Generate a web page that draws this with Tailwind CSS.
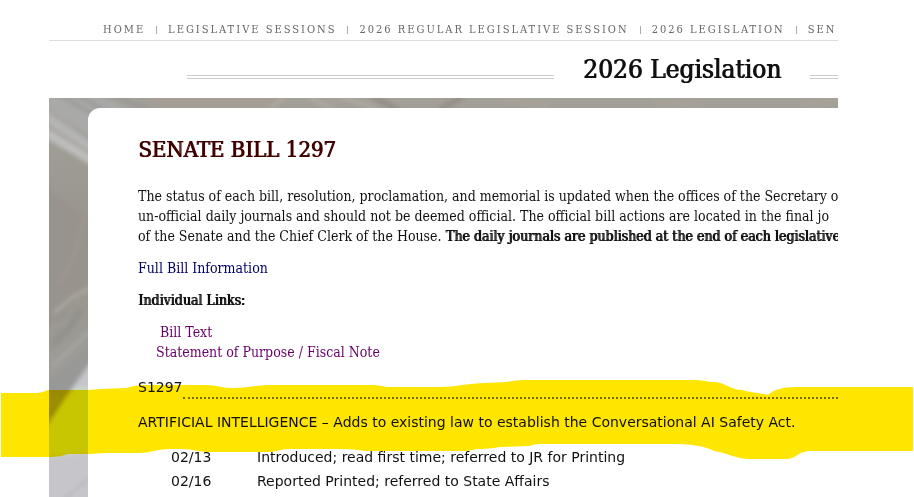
<!DOCTYPE html>
<html lang="en">
<head>
  <meta charset="UTF-8" />
  <meta name="viewport" content="width=device-width, initial-scale=1.0" />
  <title>Senate Bill 1297</title>
  <script src="https://cdn.jsdelivr.net/npm/@tailwindcss/browser@4"></script>
</head>
<body class="bg-white text-[#111] overflow-hidden">
  <div class="relative flex flex-col min-h-screen pl-[49px] pr-[76px] font-['DejaVu_Serif_Condensed','DejaVu_Serif',serif]">

    <!-- BREADCRUMBS -->
    <nav class="flex items-center gap-[11px] overflow-hidden whitespace-nowrap border-b border-[#ddd] pt-5 pl-[54px] text-[11px] leading-5 tracking-[2px] text-[#666]">
      <a href="#">HOME</a>
      <span class="h-2 w-px shrink-0 bg-[#aaa]"></span>
      <a href="#">LEGISLATIVE SESSIONS</a>
      <span class="h-2 w-px shrink-0 bg-[#aaa]"></span>
      <a href="#">2026 REGULAR LEGISLATIVE SESSION</a>
      <span class="h-2 w-px shrink-0 bg-[#aaa]"></span>
      <a href="#">2026 LEGISLATION</a>
      <span class="h-2 w-px shrink-0 bg-[#aaa]"></span>
      <a href="#">SEN</a>
    </nav>

    <!-- PAGE TITLE -->
    <div class="flex items-center gap-[29px] pl-[138px] pt-3 pb-[13px]">
      <div class="mt-4 h-1 flex-1 border-y border-[#ccc]"></div>
      <h1 class="text-[26px] leading-8 whitespace-nowrap [text-shadow:1px_0_currentColor]">2026 Legislation</h1>
      <div class="mt-4 h-1 w-7 border-y border-[#ccc]"></div>
    </div>

    <!-- BILL -->
    <main class="relative flex-1 overflow-hidden bg-[#9c978f] pl-[39px] pt-[10px]">
      <svg class="absolute inset-0 h-full w-full" aria-hidden="true">
        <defs>
          <linearGradient id="wall" x1="0" y1="0" x2="0" y2="1">
            <stop offset="0" stop-color="#a3a099" />
            <stop offset=".35" stop-color="#99958d" />
            <stop offset=".6" stop-color="#9c9a94" />
            <stop offset="1" stop-color="#a3a3a1" />
          </linearGradient>
          <filter id="soft"><feGaussianBlur stdDeviation="2" /></filter>
        </defs>
        <rect width="100%" height="100%" fill="url(#wall)" />
        <g filter="url(#soft)">
          <path d="M-5-5H45L110 25V80L-5 10Z" fill="#a9a9a8" />
          <path d="M-5 12L50 49V60L-5 24Z" fill="#b5b5b5" />
          <path d="M-5 28L50 62V72L-5 39Z" fill="#bdbdbc" />
          <path d="M8-5L60 26M24-5L70 20M60-5L100 12" stroke="#989795" stroke-width="3" />
          <path d="M95-5H240L225 12H110Z" fill="#a49e94" />
          <path d="M220 12L236-2M258-2L285 12M290-2L330 12" stroke="#b0aa9f" stroke-width="4" />
          <path d="M322-2L350 12M390 12L415-2" stroke="#938d83" stroke-width="5" />
          <path d="M455 2L490 4L500 12M605 3L638 7L650 12M750 8L789 1" fill="none" stroke="#a7a298" stroke-width="7" />
          <path d="M-5 90L45 125V170L15 220L-5 230Z" fill="#98938b" />
          <path d="M38 100Q34 145 12 185" fill="none" stroke="#9d9890" stroke-width="4" />
          <path d="M5 215L25 198L42 190" fill="none" stroke="#adaba6" stroke-width="3" />
          <path d="M3 247L20 230L32 211" fill="none" stroke="#93918b" stroke-width="7" />
          <path d="M4 268L22 251L42 232" fill="none" stroke="#a6a5a1" stroke-width="4" />
          <path d="M-5 320V285L45 245V266L15 303L5 320Z" fill="#989897" />
          <path d="M45 260L16 300L2 322L-8 340V410H45Z" fill="#c6c6ca" />
          <path d="M26 290L14 304L2 322L-8 335V359L45 354V290Z" fill="#c8dcc2" />
          <path d="M-5 293L13 299L-5 318Z" fill="#9b9d8e" />
          <path d="M5 410L42 378" stroke="#b9b9bf" stroke-width="3" />
        </g>
      </svg>

      <div class="relative h-full min-h-[389px] overflow-hidden whitespace-nowrap rounded-tl-xl bg-white pl-[50px] pt-[26px] text-sm leading-5">
        <h2 class="mb-5 text-[22px] leading-8 text-[#400000] [text-shadow:1px_0_currentColor]">SENATE BILL 1297</h2>
        <p class="mb-3">
          The status of each bill, resolution, proclamation, and memorial is updated when the offices of the Secretary o<br />
          un-official daily journals and should not be deemed official. The official bill actions are located in the final jo<br />
          of the Senate and the Chief Clerk of the House. <b class="font-normal [text-shadow:1px_0_currentColor]">The daily journals are published at the end of each legislative</b>
        </p>
        <p class="mb-3"><a href="#" class="text-[#000066]">Full Bill Information</a></p>
        <p class="mb-3 [text-shadow:1px_0_currentColor]">Individual Links:</p>
        <ul class="mb-[15px] pl-[18px] text-[#660066]">
          <li class="pl-1"><a href="#">Bill Text</a></li>
          <li><a href="#">Statement of Purpose / Fiscal Note</a></li>
        </ul>

        <div class="font-['DejaVu_Sans',sans-serif]">
          <div class="flex h-[22px]">
            <span>S1297</span>
            <span class="flex-1 border-b-2 border-dotted border-[#777]"></span>
          </div>
          <p class="mt-[13px]">ARTIFICIAL INTELLIGENCE – Adds to existing law to establish the Conversational AI Safety Act.</p>
          <table class="mt-[13px] ml-[33px] leading-6">
            <tbody>
              <tr><td class="w-[86px]">02/13</td><td>Introduced; read first time; referred to JR for Printing</td></tr>
              <tr><td>02/16</td><td>Reported Printed; referred to State Affairs</td></tr>
            </tbody>
          </table>
        </div>
      </div>
    </main>

    <!-- MARKER STROKE -->
    <svg class="pointer-events-none absolute left-0 top-[380px] h-20 w-full mix-blend-multiply" viewBox="0 380 914 80" preserveAspectRatio="none" aria-hidden="true">
      <path fill="#ffe600" d="M1 393H38Q44 392 48 390H88L100 389L127 388Q134 385 145 385H205C218 385 220 388 232 388C250 388 256 385 270 385H372C380 385 382 387 392 387H440C455 387 470 383 485 383L507 382Q514 380 524 380H692C705 380 706 382 714 382C724 382 731 390 742 390C752 393 760 393 768 395C774 390 779 387 800 387H913V451H812C797 451 797 459 786 459H750C736 459 725 452 714 451C706 447 696 444 670 444H541Q534 444 529 446L500 447C487 449 482 449 476 449Q471 451 463 451H365Q355 449 340 449H288C280 449 278 452 268 452H207C198 452 194 449 181 449H168C158 449 150 453 139 453H105L88 454H68Q60 457 50 457H1Z" />
    </svg>
  </div>
</body>
</html>
